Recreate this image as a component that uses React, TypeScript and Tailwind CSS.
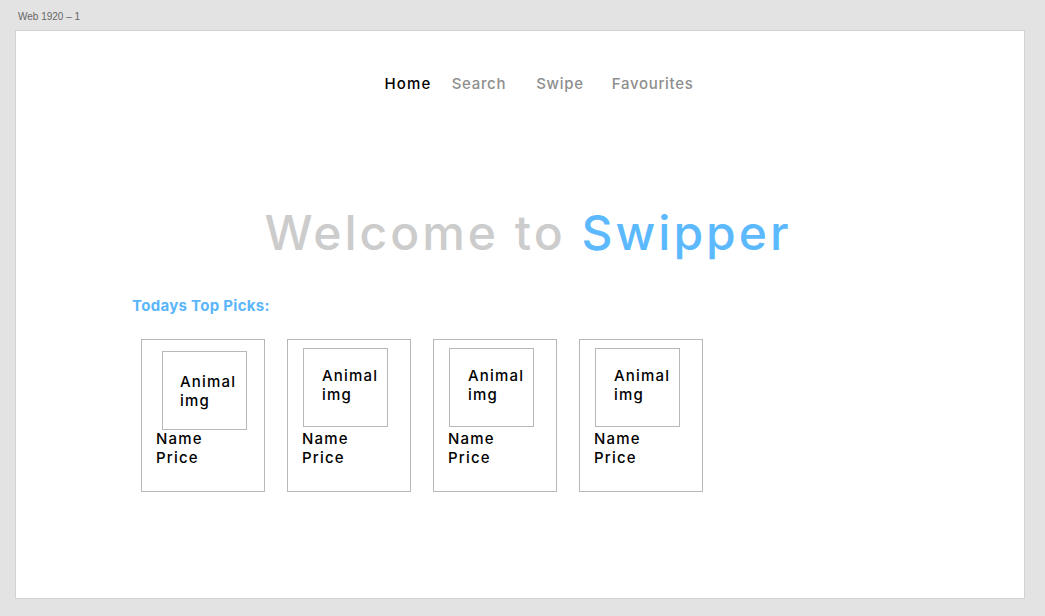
const picks = [
  { id: 1, first: true },
  { id: 2, first: false },
  { id: 3, first: false },
  { id: 4, first: false },
]

function PickCard({ first }: { first: boolean }) {
  return (
    <div className={`w-[124px] h-[153px] border border-[#b8b8b8] flex flex-col ${first ? "pt-[11px]" : "pt-[8px]"}`}>
      <div className={`w-[85px] h-[79px] border border-[#b8b8b8] ${first ? "ml-[20px] pt-[20px] pl-[17px]" : "ml-[15px] pt-[17px] pl-[18px]"}`}>
        <p className="text-[15px] leading-[19px] font-medium tracking-[1.2px] text-black">Animal<br />img</p>
      </div>
      <div className={`text-[15px] leading-[19px] font-medium tracking-[1.2px] text-black ${first ? "ml-[14px] mt-[-1px]" : "ml-[14px] mt-[2px]"}`}>
        <p>Name</p>
        <p>Price</p>
      </div>
    </div>
  )
}

export default function App() {
  return (
    <div className="w-[1045px] h-[616px] bg-[#e3e3e3] relative overflow-hidden" style={{ fontFamily: "Inter, 'DejaVu Sans', sans-serif" }}>
      <p className="absolute left-[18px] top-[9px] text-[10px] text-[#666666]" style={{ fontFamily: "'Liberation Sans', Arial, sans-serif" }}>Web 1920 – 1</p>

      <main className="absolute left-[15px] top-[30px] w-[1010px] h-[569px] bg-white border border-[#d2d2d2] flex flex-col">
        <nav className="flex justify-center pt-[42px] pl-[38px] text-[15px] font-medium tracking-[0.7px]">
          <a href="#!" className="text-black tracking-[1.2px]">Home</a>
          <a href="#!" className="text-[#8e8e8e] ml-[20px]">Search</a>
          <a href="#!" className="text-[#8e8e8e] ml-[30px]">Swipe</a>
          <a href="#!" className="text-[#8e8e8e] ml-[28px]">Favourites</a>
        </nav>

        <h1 className="text-center mt-[109px] text-[48px] leading-[56px] font-medium tracking-[3px] pl-[16px]">
          <span className="text-[#cccccc]">Welcome to </span>
          <span className="text-[#5cb9fd]">Swipper</span>
        </h1>

        <section className="pl-[116px] mt-[34px]">
          <h3 className="text-[15px] font-bold tracking-[0.3px] text-[#5ab6fb]">Todays Top Picks:</h3>
          <ul className="flex gap-[22px] ml-[9px] mt-[22px]">
            {picks.map(p => (
              <li key={p.id}>
                <PickCard first={p.first} />
              </li>
            ))}
          </ul>
        </section>
      </main>
    </div>
  )
}
